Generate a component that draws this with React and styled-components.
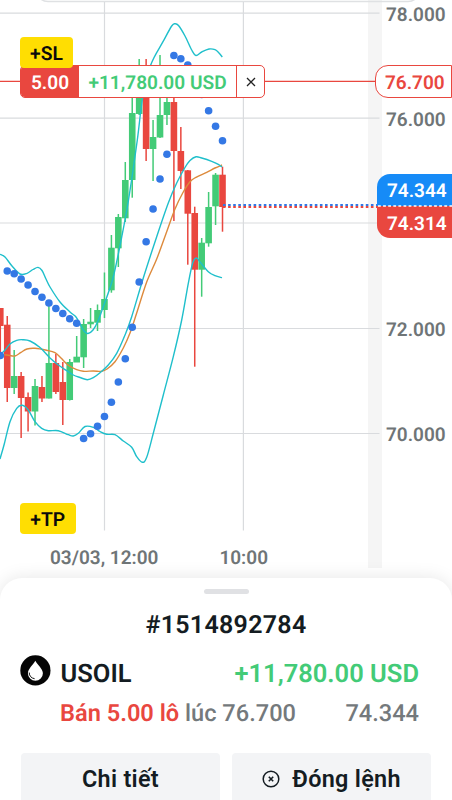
import React from "react";
import styled, { createGlobalStyle } from "styled-components";

const GlobalStyle = createGlobalStyle`
  * {
    box-sizing: border-box;
  }
  body {
    margin: 0;
    overflow: hidden;
    background: #fff;
    font-family: Roboto, "Liberation Sans", sans-serif;
    font-weight: 600;
    text-rendering: geometricPrecision;
  }
`;

const RED = "#e9473f";
const GREEN = "#43cb77";
const TEAL = "#1fbfcb";
const ORANGE = "#dd8a3c";
const BLUE = "#3478e5";

const Screen = styled.main`
  display: flex;
  flex-direction: column;
  width: 452px;
  height: 800px;
  overflow: hidden;
  background: #fff;
`;

const ChartPane = styled.section`
  position: relative;
  display: flex;
  flex: none;
  height: 578px;
`;

const Plot = styled.div`
  width: 368px;
`;

const Gutter = styled.div`
  width: 14px;
  height: 568px;
  background: #f5f5f5;
`;

const PriceAxis = styled.div`
  display: flex;
  flex-direction: column;
  flex: 1;
  margin-top: -38px;
  padding-left: 4px;
`;

const Tick = styled.div`
  display: flex;
  align-items: center;
  height: 105px;
  color: #6f7577;
  font-size: 19px;
`;

const TimeAxis = styled.div`
  display: flex;
  justify-content: space-between;
  padding: 545px 100px 0 50px;
  color: #6f7577;
  font-size: 19px;
  line-height: 25px;
  white-space: nowrap;
`;

const Drawing = styled.svg`
  position: absolute;
  top: 0;
  left: 0;
`;

const Badge = styled.div`
  position: absolute;
  left: 20px;
  top: ${(p) => p.$top}px;
  width: ${(p) => p.$width}px;
  height: 31px;
  border-radius: 4px;
  background: #ffde02;
  color: #0b0b0b;
  font-size: 19.3px;
  line-height: 33px;
  text-align: center;
`;

const Position = styled.div`
  position: absolute;
  left: 20px;
  top: 65px;
  display: flex;
  width: 245px;
  height: 33px;
  border: 1.4px solid ${RED};
  border-radius: 5px;
  background: #fff;
  overflow: hidden;
  font-size: 19.1px;
  line-height: 33px;
`;

const Volume = styled.div`
  width: 58px;
  background: ${RED};
  color: #fff;
  text-align: center;
`;

const Profit = styled.div`
  flex: 1;
  color: ${GREEN};
  text-align: center;
  white-space: nowrap;
`;

const Close = styled.div`
  display: flex;
  align-items: center;
  justify-content: center;
  width: 28px;
  border-left: 1.4px solid ${RED};
`;

const PriceTag = styled.div`
  position: absolute;
  left: ${(p) => p.$left}px;
  top: ${(p) => p.$top}px;
  width: ${(p) => 452 - p.$left}px;
  height: ${(p) => p.$height || 32}px;
  padding-left: ${(p) => p.$pad}px;
  border-radius: ${(p) => p.$radius};
  border: ${(p) => (p.$outline ? `1.4px solid ${RED}` : "0")};
  background: ${(p) => p.$bg};
  color: ${(p) => p.$color || "#fff"};
  font-size: 19px;
  line-height: ${(p) => p.$line || 32}px;
`;

const Sheet = styled.section`
  position: relative;
  display: flex;
  flex-direction: column;
  flex: none;
  height: 260px;
  padding: 10.5px 21px 0;
  border-radius: 22px 22px 0 0;
  background: #fff;
  box-shadow: 0 0 18px rgba(0, 0, 0, 0.1);
  color: #141c22;
`;

const Handle = styled.div`
  align-self: center;
  width: 45px;
  height: 5px;
  border-radius: 3px;
  background: #e0e1e4;
`;

const Title = styled.h1`
  margin: 17.5px 0 0;
  font-size: 25px;
  font-weight: 600;
  line-height: 30px;
  letter-spacing: 0.3px;
  text-align: center;
`;

const Row = styled.div`
  display: flex;
  align-items: center;
  height: ${(p) => p.$height}px;
  margin-top: ${(p) => p.$gap}px;
  padding-right: 12px;
  font-size: ${(p) => p.$size}px;
  white-space: nowrap;
`;

const SymbolName = styled.span`
  margin-left: 9.5px;
`;

const Amount = styled.span`
  margin-left: auto;
  color: ${(p) => p.$color};
  font-weight: ${(p) => p.$weight || 600};
`;

const Deal = styled.span`
  margin-left: 39px;
  color: #74797c;
  font-weight: 500;
  b {
    color: ${RED};
    font-weight: 600;
  }
`;

const Actions = styled.div`
  display: grid;
  grid-template-columns: 1fr 1fr;
  gap: 12px;
  margin-top: 25px;
`;

const Action = styled.button`
  display: flex;
  align-items: center;
  justify-content: center;
  gap: 12px;
  height: 51px;
  padding: 1px 0 0;
  border: 0;
  border-radius: 4px;
  background: #f3f4f6;
  color: #141c22;
  font: 600 23.4px Roboto, "Liberation Sans", sans-serif;
  letter-spacing: 0.3px;
`;

// [up, bodyTop, bodyBottom, wickTop, wickBottom]
const candles = [
  [0, 308, 326, 308, 355],
  [0, 324.7, 388, 316, 402],
  [1, 376, 388, 350, 394],
  [0, 376, 398, 372, 438],
  [0, 397, 411.5, 392.5, 431.5],
  [1, 386, 411.5, 379, 425.5],
  [0, 387, 398.5, 376, 402],
  [1, 363, 398.5, 303, 398.5],
  [0, 363, 392, 354, 394],
  [0, 382, 400, 362, 425],
  [1, 362, 400, 359, 400.5],
  [1, 356.7, 362.5, 336, 362],
  [1, 324, 357.3, 319, 368],
  [1, 321.7, 324.3, 308, 328],
  [1, 310, 322.7, 304.5, 331],
  [1, 299, 310, 272.5, 318],
  [1, 247.7, 290.3, 235, 292.7],
  [1, 217, 248.3, 214, 267],
  [1, 180, 218.3, 162, 222],
  [1, 113, 180, 90, 197.7],
  [1, 80, 114, 59, 115],
  [0, 80, 149, 59, 161],
  [1, 137, 149, 120, 181],
  [1, 115, 137.5, 55, 138],
  [1, 102, 115, 90, 125],
  [0, 102, 151, 90, 221],
  [0, 151, 171, 127, 189],
  [0, 170.3, 213.7, 170, 264.7],
  [0, 213, 269.7, 206.7, 366.7],
  [1, 242.7, 269.7, 238, 296.7],
  [1, 207, 243.3, 192, 246.7],
  [1, 174.7, 206.3, 173, 225],
  [0, 174.7, 207, 166.7, 231.7],
];

const sar = [
  355.5, 271, 273.7, 279, 285, 291.5, 297.3, 303, 308.5, 313.5, 318.7, 323.3,
  438.5, 433.7, 426.2, 416.5, 402.2, 382, 358.7, 327.2, 282, 241.8, 209, 179,
  154.3, 55.5, 58.7, 65, 78, 94.5, 110.7, 126.2, 140.7,
];

const upper = [
  [0, 254.3], [5, 257], [12, 266], [20, 274], [27, 273.3], [33, 269.5],
  [38, 267.4], [42, 270.5], [46, 279], [50, 287], [60, 302], [70, 312], [76, 317],
  [80, 324], [84, 331], [88, 333.5], [93, 330], [98, 321], [103.5, 306],
  [113, 278], [121.7, 237], [128.5, 200], [137.3, 140], [142.6, 98],
  [150.7, 65], [163, 41.7], [171.7, 26], [175, 23.7], [178.5, 25.5], [185, 36],
  [191.7, 50], [196, 55.5], [201.7, 52], [209, 49], [215, 49.7], [219, 53],
  [222.3, 57],
];

const middle = [
  [0, 355], [5, 350], [10, 344], [16.7, 340.3], [22.7, 339.7], [30, 341],
  [40, 347.5], [50, 358], [58.3, 365], [66.7, 370.7], [73.3, 375], [80, 377.5],
  [87.3, 379.7], [93.3, 377.7], [100, 372.7], [108.3, 365], [116.7, 353.3],
  [125, 335], [131.7, 316.7], [143.3, 278], [156.7, 236.7], [168.3, 203],
  [176.7, 183], [185, 167.5], [190, 160.5], [196, 156.8], [201.7, 158],
  [211.7, 161.3], [218.3, 164.3], [222, 167],
];

const lower = [
  [0, 459], [4, 445], [10, 421.7], [16.7, 408.3], [22.3, 405.3], [28.3, 410],
  [35, 421.7], [41.7, 428.3], [48.3, 430.7], [58.3, 430.7], [68.3, 434.7],
  [73.3, 436], [78.3, 433.3], [85, 426.5], [93.3, 427.3], [100, 431.5],
  [106.7, 434.3], [115, 434.7], [123.3, 441], [131.7, 447.3], [136.7, 456.7],
  [142.3, 462.3], [146.7, 457.3], [153.3, 433.3], [163.3, 395], [173.3, 356.7],
  [181.7, 320], [188.3, 283.3], [192.7, 263], [196.3, 258], [200, 262],
  [208.3, 271.7], [215, 275.7], [222, 277.7],
];

const average = [
  [0, 354.5], [7, 355], [15, 356], [21, 352.3], [27, 349], [35, 348.3],
  [46.7, 350.3], [55, 352.7], [61, 358], [68.3, 365.3], [76.7, 369.7],
  [83.3, 371.3], [93.3, 371], [101.7, 371.3], [107, 369], [115, 361.7],
  [123.3, 348], [130, 333], [136.7, 313], [146.7, 282], [156.7, 259],
  [166.7, 231.7], [175, 209], [183, 192.5], [190, 181.7], [196, 177.3],
  [206.7, 172.3], [215, 168], [222, 165],
];

const candleX = (i) => 0.3 + i * 6.944;

// Catmull-Rom spline through the points, written as cubic beziers
const smooth = (pts) =>
  pts.slice(1).reduce((d, p, k) => {
    const a = pts[Math.max(k - 1, 0)];
    const b = pts[k];
    const c = pts[Math.min(k + 2, pts.length - 1)];
    return `${d}C${b[0] + (p[0] - a[0]) / 6},${b[1] + (p[1] - a[1]) / 6} ${
      p[0] - (c[0] - b[0]) / 6
    },${p[1] - (c[1] - b[1]) / 6} ${p[0]},${p[1]}`;
  }, `M${pts[0]}`);

const Chart = () => (
  <Drawing width="452" height="578" fill="none">
    <rect x="36" y="-30" width="384" height="31.5" rx="12" stroke="#dfe1e3" strokeWidth="1.4" />
    <g stroke="#d9dbde" strokeWidth="1.2">
      {[13.2, 118.2, 223, 328.5, 433.5].map((y) => (
        <path key={y} d={`M0 ${y}H379.5`} />
      ))}
      <path d="M104.5 2V530.5M243.4 2V530.5" />
    </g>
    {candles.map(([up, top, bottom, high, low], i) => (
      <g key={i} fill={up ? GREEN : RED}>
        <rect x={candleX(i) - 0.75} y={high} width="1.5" height={low - high} />
        <rect x={candleX(i) - 3.3} y={top} width="6.6" height={bottom - top} />
      </g>
    ))}
    <path d={smooth(average)} stroke={ORANGE} strokeWidth="1.4" />
    {[upper, middle, lower].map((line, i) => (
      <path key={i} d={smooth(line)} stroke={TEAL} strokeWidth="1.4" />
    ))}
    {sar.map((y, i) => (
      <circle key={i} cx={candleX(i)} cy={y} r="3.8" fill={BLUE} />
    ))}
    <path d="M0 81.3H376" stroke={RED} strokeWidth="1.3" />
    <path d="M223 207H378" stroke={RED} strokeWidth="2" strokeDasharray="2.6 2.5" />
    <path d="M223 205H378" stroke={BLUE} strokeWidth="2" strokeDasharray="2.6 2.5" />
  </Drawing>
);

const TagDivider = () => (
  <Drawing width="452" height="240">
    <path d="M378 206H452" stroke="#fff" strokeWidth="1.4" strokeDasharray="2.8 2.3" />
  </Drawing>
);

const OilMark = styled.svg`
  margin: -7px 0 0 -1px;
`;

const OilIcon = () => (
  <OilMark width="31" height="31" viewBox="0 0 31 31">
    <circle cx="15.4" cy="15.4" r="15.1" fill="#050505" />
    <path d="M15.3 5.8C13.3 9.5 7.9 14.2 7.9 18.3a7.5 7.5 0 0 0 15 0C22.9 14.2 17.3 9.5 15.3 5.8Z" fill="#fff" />
    <path d="M9.2 17.5c0 3.3 2 5.7 5.4 6.2" fill="none" stroke="#111" strokeWidth="1" />
  </OilMark>
);

const CloseIcon = () => (
  <svg width="18" height="18" viewBox="0 0 18 18" fill="none" stroke="#141c22">
    <circle cx="9" cy="9" r="7.8" strokeWidth="1.5" />
    <path d="M6.8 6.8l4.4 4.4M11.2 6.8l-4.4 4.4" strokeWidth="1.6" />
  </svg>
);

export default function App() {
  return (
    <Screen>
      <GlobalStyle />
      <ChartPane>
        <Plot>
          <TimeAxis>
            <span>03/03, 12:00</span>
            <span>10:00</span>
          </TimeAxis>
        </Plot>
        <Gutter />
        <PriceAxis>
          <Tick>78.000</Tick>
          <Tick>76.000</Tick>
          <Tick />
          <Tick>72.000</Tick>
          <Tick>70.000</Tick>
        </PriceAxis>
        <Chart />
        <Position>
          <Volume>5.00</Volume>
          <Profit>+11,780.00 USD</Profit>
          <Close>
            <svg width="10" height="10" viewBox="0 0 10 10" stroke="#222" strokeWidth="1.3">
              <path d="M1 1l8 8M9 1l-8 8" />
            </svg>
          </Close>
        </Position>
        <Badge $top={37} $width={53}>+SL</Badge>
        <Badge $top={502.5} $width={55.5}>+TP</Badge>
        <PriceTag $left={375} $top={65} $height={33} $pad={9} $radius="13px 0 0 13px" $bg="#fff" $color={RED} $line={33} $outline>
          76.700
        </PriceTag>
        <PriceTag $left={377} $top={174} $pad={10} $radius="13px 0 0 0" $bg="#168bf7" $line={33}>
          74.344
        </PriceTag>
        <PriceTag $left={377} $top={206} $pad={10} $radius="0 0 0 13px" $bg={RED} $line={35}>
          74.314
        </PriceTag>
        <TagDivider />
      </ChartPane>
      <Sheet>
        <Handle />
        <Title>#1514892784</Title>
        <Row $height={36} $gap={14.5} $size={25.5}>
          <OilIcon />
          <SymbolName>USOIL</SymbolName>
          <Amount $color={GREEN}>+11,780.00 USD</Amount>
        </Row>
        <Row $height={30} $gap={6} $size={23.6}>
          <Deal>
            <b>Bán 5.00 lô</b> lúc 76.700
          </Deal>
          <Amount $color="#74797c" $weight={500}>74.344</Amount>
        </Row>
        <Actions>
          <Action>Chi tiết</Action>
          <Action>
            <CloseIcon />
            Đóng lệnh
          </Action>
        </Actions>
      </Sheet>
    </Screen>
  );
}
